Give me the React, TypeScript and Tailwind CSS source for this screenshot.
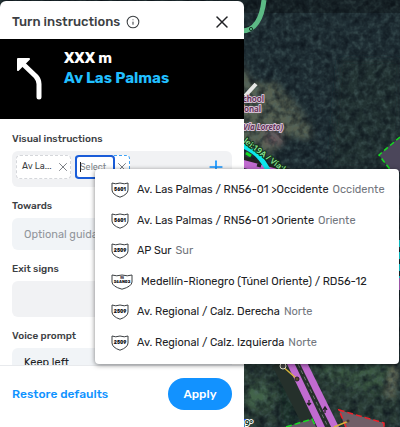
import { ReactNode } from "react";
import { Info, Plus, X } from "lucide-react";

interface IRoad {
  shield: string;
  prefix?: string;
  name: string;
  direction?: string;
}

const roads: IRoad[] = [
  { shield: "5601", name: "Av. Las Palmas / RN56-01 >Occidente", direction: "Occidente" },
  { shield: "5601", name: "Av. Las Palmas / RN56-01 >Oriente", direction: "Oriente" },
  { shield: "2509", name: "AP Sur", direction: "Sur" },
  { shield: "56AN02", prefix: "RN", name: "Medellín-Rionegro (Túnel Oriente) / RD56-12" },
  { shield: "2509", name: "Av. Regional / Calz. Derecha", direction: "Norte" },
  { shield: "2509", name: "Av. Regional / Calz. Izquierda", direction: "Norte" },
];

const Shield = ({ text, prefix }: { text: string; prefix?: string }) => {
  const w = prefix ? 22 : 18;
  const m = w / 2;
  return (
    <svg width={w} height="16" viewBox={`0 0 ${w} 16`} className="shrink-0" aria-hidden="true">
      <path
        d={`M1 1 Q${m / 2} 2.6 ${m} 1 Q${m * 1.5} 2.6 ${w - 1} 1 V8 Q${w - 1.2} 12.5 ${m} 15.2 Q1.2 12.5 1 8Z`}
        fill="#fff"
        stroke="#3c4043"
        strokeWidth="1"
        strokeLinejoin="round"
      />
      {prefix && (
        <text x={m} y="5.2" fontSize="2.6" fontWeight="700" textAnchor="middle" fill="#202124">
          {prefix}
        </text>
      )}
      <text x={m} y={prefix ? 9 : 9.4} fontSize={prefix ? 4 : 4.6} fontWeight="800" textAnchor="middle" fill="#202124">
        {text}
      </text>
    </svg>
  );
};

const MapBackground = () => (
  <svg
    className="absolute inset-0 h-full w-full"
    viewBox="0 0 400 427"
    preserveAspectRatio="xMaxYMin slice"
    aria-hidden="true"
  >
    <defs>
      <filter id="trees" x="0" y="0" width="100%" height="100%" colorInterpolationFilters="sRGB">
        <feTurbulence type="fractalNoise" baseFrequency="0.22" numOctaves="2" seed="4" />
        <feColorMatrix values="0 0 0 0 0.3  0 0 0 0 0.4  0 0 0 0 0.4  1.2 0 0 0 -0.5" />
      </filter>
      <filter id="shade" x="0" y="0" width="100%" height="100%" colorInterpolationFilters="sRGB">
        <feTurbulence type="fractalNoise" baseFrequency="0.12" numOctaves="3" seed="9" />
        <feColorMatrix values="0 0 0 0 0.04  0 0 0 0 0.07  0 0 0 0 0.1  1.6 0 0 0 -0.6" />
      </filter>
      <filter id="soft">
        <feGaussianBlur stdDeviation="3" />
      </filter>
    </defs>
    <rect width="400" height="427" fill="#1f2e34" />
    <g filter="url(#soft)">
      <path d="M340 60H400V168H330Z" fill="#213330" />
      <path d="M240 60L250 78L262 84L276 82L290 98L302 112L313 132L310 140L290 136L270 156L240 144Z" fill="#566151" />
      <path d="M264 128L282 130L284 144L266 146Z" fill="#66595c" />
      <path d="M240 364H400V427H240Z" fill="#293e35" />
      <path d="M316 364H390L380 392L345 386L325 376Z" fill="#3b5943" />
      <ellipse cx="259" cy="396" rx="15" ry="12" fill="#426349" />
      <path d="M392 366L398 364L392 398L386 394Z" fill="#767a63" />
      <path d="M276 372L290 372L305 424L282 424Z" fill="#1f312a" />
    </g>
    <rect width="400" height="427" filter="url(#trees)" />
    <rect width="400" height="427" filter="url(#shade)" />
    <rect width="400" height="13" fill="#000" opacity="0.25" />
    <path d="M264 0C262 18 255 32 240 31" fill="none" stroke="#5cba85" strokeWidth="5" />
    <circle cx="251" cy="29" r="1.6" fill="none" stroke="#173d29" strokeWidth="1" />
    <path d="M245 96L256 84" stroke="#e5e6e4" strokeWidth="4" />

    <path d="M400 137L379 155L392 172H400Z" fill="#4b465a" />
    <path d="M400 137L379 155L392 172" fill="none" stroke="#16dc22" strokeWidth="1.5" strokeDasharray="5 3" />
    <path d="M240 161L300 177" stroke="#222" strokeWidth="11" />
    <path d="M240 163L300 179" stroke="#c16bd0" strokeWidth="8" />
    <path d="M246 153L251 156" stroke="#16dc22" strokeWidth="3" />
    <path d="M257 165L261 166" stroke="#222" strokeWidth="3" />
    <path d="M240 145C254 149 262 158 269 172" fill="none" stroke="#0ee6ed" strokeWidth="5" />
    <path d="M398 240V278" stroke="#0ee6ed" strokeWidth="4" strokeDasharray="7 5" />
    <path d="M398 278V290" stroke="#c16bd0" strokeWidth="4" />

    <g fontFamily="Noto Sans, sans-serif" paintOrder="stroke" strokeLinejoin="round">
      <g fontSize="8" fontWeight="600" fill="#5b2a53" stroke="#d3bfd0" strokeWidth="2">
        <text x="264" y="102" textAnchor="end">School</text>
        <text x="261" y="112" textAnchor="end">ional</text>
        <text x="283" y="130" textAnchor="end" fontStyle="italic">(Vía Loreto)</text>
      </g>
      <text fontSize="8" fontWeight="600" fill="#8ce492" stroke="#12301a" strokeWidth="2" transform="translate(243 142) rotate(37)">
        lei:19A / Vía:l
      </text>
    </g>

    <path d="M284 360L322 435" stroke="#25302b" strokeWidth="26" />
    <path d="M289 360L323 431" stroke="#c16bd0" strokeWidth="7" />
    <path d="M302 360L337 431" stroke="#c16bd0" strokeWidth="7" />
    <path d="M298 364L328 427" stroke="#69776f" strokeWidth="1" strokeDasharray="4 3" />
    <path
      d="M309 400L309 404M307 403L309 405L311 403M325 413V408M323 410L325 407L327 410"
      fill="none"
      stroke="#222"
      strokeWidth="1.3"
    />
    <path d="M281 365L297 379" stroke="#d6b43c" strokeWidth="1.5" />
    <circle cx="283" cy="366" r="3" fill="#444" stroke="#e8e6d2" strokeWidth="1" />
    <circle cx="297" cy="379" r="2" fill="#5a4a28" stroke="#222" strokeWidth="1" />
    <path d="M286 427L312 419L316 427Z" fill="#665967" />
    <path d="M286 427L312 419L316 427" fill="none" stroke="#16dc22" strokeWidth="1.5" strokeDasharray="6 3" />
    <path d="M339 410L384 423V427H345Z" fill="#705e67" />
    <path d="M346 427L339 410L384 423V427" fill="none" stroke="#f0202a" strokeWidth="1.5" strokeDasharray="6 3" />
    <path d="M334 427L349 421" stroke="#d6b43c" strokeWidth="1.5" />
    <circle cx="348" cy="421" r="1.6" fill="#463a32" />
    <path d="M244 419H248V424H244Z" fill="#2145ee" />
    <text
      x="245"
      y="426"
      fontFamily="Noto Sans, sans-serif"
      fontSize="8"
      fontWeight="700"
      fill="#173d29"
      stroke="#fff"
      strokeWidth="2"
      paintOrder="stroke"
    >
      9°
    </text>
  </svg>
);

const Field = ({ id, label, children }: { id: string; label: string; children: ReactNode }) => (
  <div className="flex flex-col gap-1">
    <label htmlFor={id} className="text-[10px] leading-4 font-medium text-[#3c4043]">
      {label}
    </label>
    {children}
  </div>
);

const App = () => {
  return (
    <div className="relative h-screen overflow-hidden bg-[#1d2b32] font-['Rubik','Roboto',sans-serif] text-[#202124]">
      <MapBackground />

      <div className="relative flex h-full w-61 flex-col pt-px">
        <header className="flex h-[38px] shrink-0 items-center gap-1.5 rounded-t-md bg-white pt-1 pr-3 pl-3">
          <h1 className="text-[13px] leading-5 font-medium text-[#3c4043]">Turn instructions</h1>
          <button type="button" aria-label="About turn instructions">
            <Info size={14} strokeWidth={1.8} className="text-[#3c4043]" />
          </button>
          <button type="button" aria-label="Close" className="ml-auto">
            <X size={20} strokeWidth={1.8} />
          </button>
        </header>

        <section className="flex h-20 shrink-0 gap-5 bg-black pt-[9px] pl-4">
          <svg width="28" height="56" viewBox="0 0 28 56" aria-hidden="true">
            <path d="M23 49V36Q23 32 20 28.500L8 17" fill="none" stroke="#fff" strokeWidth="5" strokeLinecap="round" />
            <path d="M2 11H13L2 22Z" fill="#fff" stroke="#fff" strokeWidth="2" strokeLinejoin="round" />
          </svg>
          <div className="text-[15px] leading-5 font-bold text-white">
            <p>XXX m</p>
            <p className="text-[#21bfff]">Av Las Palmas</p>
          </div>
        </section>

        <main className="flex min-h-0 flex-1 flex-col gap-[11px] overflow-hidden bg-white px-3 pt-3">
          <Field id="visual" label="Visual instructions">
            <div className="flex h-9 items-start rounded-md bg-[#f1f2f4] px-1 pt-1">
              <div className="flex h-6 w-[55px] items-center justify-between rounded-sm border border-dashed border-[#d5d7db] bg-white pl-[5px] text-[9px] text-[#3c4043]">
                <span>Av La...</span>
                <button type="button" aria-label="Remove Av Las Palmas">
                  <X size={14} strokeWidth={1.6} className="text-[#72767d]" />
                </button>
              </div>
              <div className="relative ml-1 flex h-6 items-center rounded-sm border border-dashed border-[#3ea2f5] bg-white">
                <input
                  id="visual"
                  placeholder="Select"
                  className="-ml-px h-6 w-10 rounded-sm border-2 border-[#1a5cd8] bg-white px-[3px] text-[9px] outline-none placeholder:text-[#80868b]"
                />
                {/* caret */}
                <span className="absolute top-1.5 left-1 h-2.5 w-px bg-[#202124]" />
                <button type="button" aria-label="Remove">
                  <X size={14} strokeWidth={1.6} className="text-[#72767d]" />
                </button>
              </div>
              <button type="button" aria-label="Add instruction" className="mt-0.5 ml-auto pr-0.5">
                <Plus size={20} strokeWidth={2} className="text-[#0f93ff]" />
              </button>
            </div>
          </Field>
          <Field id="towards" label="Towards">
            <input
              id="towards"
              placeholder="Optional guidance"
              className="h-8 w-full rounded-md bg-[#f1f4f7] px-3 text-[11px] placeholder:text-[#91969c]"
            />
          </Field>
          <Field id="exit" label="Exit signs">
            <input id="exit" className="h-9 w-full rounded-md bg-[#f1f2f4] px-3 text-[11px]" />
          </Field>
          <Field id="voice" label="Voice prompt">
            <input
              id="voice"
              defaultValue="Keep left"
              className="h-7 w-full shrink-0 rounded-md bg-[#f1f4f7] px-3 text-[11px]"
            />
          </Field>
        </main>

        <footer className="flex h-[62px] shrink-0 items-center justify-between border-t border-[#e8eaed] bg-white px-3 pb-1.5">
          <button type="button" className="text-xs font-medium text-[#0f93ff]">
            Restore defaults
          </button>
          <button type="button" className="h-8 w-16 rounded-full bg-[#1292ff] text-xs font-medium text-white">
            Apply
          </button>
        </footer>
      </div>

      <ul
        role="listbox"
        aria-label="Road names"
        className="absolute top-[169px] right-px left-[95px] flex h-[195px] flex-col rounded bg-white py-1.5 shadow-[0_1px_5px_rgba(0,0,0,0.5)]"
      >
        {roads.map((road) => (
          <li
            key={road.name}
            role="option"
            aria-selected={false}
            className="flex flex-1 items-center pl-4 text-[11px] leading-4 whitespace-nowrap"
          >
            <Shield text={road.shield} prefix={road.prefix} />
            <span className="ml-2">{road.name}</span>
            <span className="ml-1 text-[#72767d]">{road.direction}</span>
          </li>
        ))}
      </ul>
    </div>
  );
};

export default App;
